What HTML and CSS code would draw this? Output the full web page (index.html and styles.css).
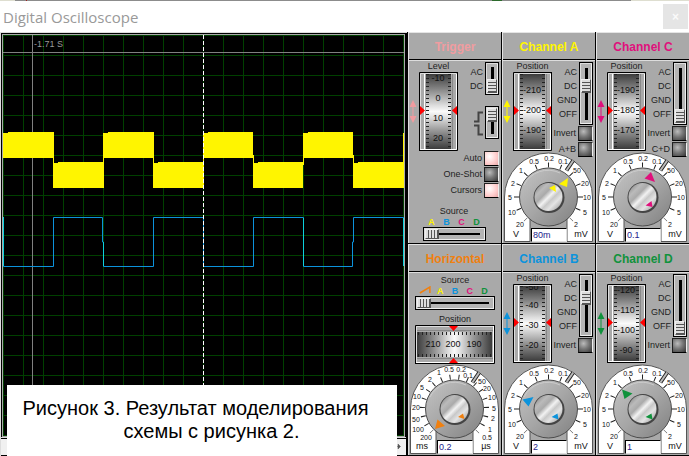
FILE: index.html
```html
<!DOCTYPE html>
<html lang="en">
<head>
<meta charset="utf-8">
<title>Digital Oscilloscope</title>
<link rel="stylesheet" href="styles.css">
</head>
<body>
<svg class="defs" width="0" height="0" aria-hidden="true">
  <defs>
    <linearGradient id="roll" x1="0" y1="0" x2="0" y2="1">
      <stop offset="0" stop-color="#3c3c3c"/><stop offset=".2" stop-color="#858585"/>
      <stop offset=".42" stop-color="#dedede"/><stop offset=".5" stop-color="#fafafa"/>
      <stop offset=".58" stop-color="#dedede"/><stop offset=".8" stop-color="#858585"/>
      <stop offset="1" stop-color="#3c3c3c"/>
    </linearGradient>
    <linearGradient id="rollh">
      <stop offset="0" stop-color="#3c3c3c"/><stop offset=".2" stop-color="#858585"/>
      <stop offset=".42" stop-color="#dedede"/><stop offset=".5" stop-color="#fafafa"/>
      <stop offset=".58" stop-color="#dedede"/><stop offset=".8" stop-color="#858585"/>
      <stop offset="1" stop-color="#3c3c3c"/>
    </linearGradient>
    <linearGradient id="knob" x1="0" y1="0" x2="1" y2="1">
      <stop offset="0" stop-color="#c4c4c4"/><stop offset=".5" stop-color="#a6a6a6"/><stop offset="1" stop-color="#808080"/>
    </linearGradient>
    <linearGradient id="cap" x1="0" y1="0" x2="1" y2="1">
      <stop offset="0" stop-color="#777"/><stop offset=".25" stop-color="#bbb"/><stop offset=".38" stop-color="#aaa"/>
      <stop offset=".5" stop-color="#f2f2f2"/><stop offset=".6" stop-color="#c8c8c8"/><stop offset=".72" stop-color="#e4e4e4"/>
      <stop offset="1" stop-color="#888"/>
    </linearGradient>
    <symbol id="face" viewBox="0 0 90 90">
      <path d="M.5 89.500V45A44 44 0 0 1 88.500 45V89.500H63V66H26V89.500Z" fill="#fff" stroke="#555"/>
      <path d="M62.400 18.500L69.200 8.500" stroke="#222" stroke-width="4"/>
      <path d="M62.400 18.500L69.200 8.500" stroke="#bbb" stroke-width="2"/>
    </symbol>
    <symbol id="knobs" viewBox="0 0 90 90">
      <circle cx="44.500" cy="45" r="29" fill="url(#knob)" stroke="#4c4c4c"/>
      <path d="M20 33A27 27 0 0 1 56 21" fill="none" stroke="#ccc"/>
      <circle cx="45" cy="45.500" r="15.500" fill="#444"/>
      <circle cx="44.500" cy="45" r="14" fill="url(#cap)"/>
    </symbol>
    <symbol id="wheel" viewBox="0 0 39 79">
      <path d="M.5 79V.5H39" fill="none" stroke="#000"/>
      <path d="M1.500 77V1.500H37.500" fill="none" stroke="#ddd"/>
      <path d="M38.500 0V78.500H0" fill="none" stroke="#000"/>
      <path d="M37.500 2V77.500H1" fill="none" stroke="#fff"/>
      <path d="M5.500 2V77" stroke="#fff"/><path d="M33.500 2V77" stroke="#888"/>
      <rect x="7" y="2" width="25" height="75" fill="url(#roll)"/>
      <path d="M1 34L6 38.500L1 43ZM38 34L33 38.500L38 43Z" fill="#f00"/>
    </symbol>
    <symbol id="updown" viewBox="0 0 8 23">
      <path d="M4 4V19" stroke="currentColor"/>
      <path d="M4 0L7.500 7H.5ZM4 23L7.500 16H.5Z" fill="currentColor"/>
    </symbol>
    <pattern id="graticule" width="20" height="20" patternUnits="userSpaceOnUse">
      <path d="M.5 0V20M0 .5H20" stroke="#004000"/>
    </pattern>
  </defs>
</svg>

<div class="strip"><i class="pale start"></i><i class="red"></i><i class="green"></i><i class="pale end"></i></div>
<header class="titlebar">
  <h1>Digital Oscilloscope</h1>
  <button class="close" type="button" aria-label="Close">×</button>
</header>

<main class="device">
  <section class="display">
    <svg class="trace" viewBox="0 0 401 401" preserveAspectRatio="none">
      <rect width="401" height="401" fill="#000"/>
      <rect width="401" height="401" fill="url(#graticule)"/>
      <path d="M0 17.500H401M29.500 0V401" stroke="#808080"/>
      <g fill="#fff500">
        <path d="M0 98H5V97H51V123H0ZM100 98H105V97H151V123H100ZM200 98H205V97H250V123H200ZM300 98H305V97H350V123H300Z"/>
        <path d="M50 128H55V127H101V153H50ZM150 128H155V127H201V153H150ZM250 128H255V127H300V153H250ZM350 128H355V127H401V153H350Z"/>
        <path d="M50 120H51V130H50ZM100 120H101V130H100ZM150 120H151V130H150ZM200 120H201V130H200ZM250 120H251V130H250ZM300 120H301V130H300ZM350 120H351V130H350ZM400 98H401V130H400Z"/>
      </g>
      <path d="M.5 182V231.500H50.500V182.500H99.500V207H100.500V231.500H150.500V182.500H200.500V231.500H250.500V182.500H300.500V231.500H349.500V207H350.500V182.500H400.500V231" fill="none" stroke="#0c93dc"/>
      <path d="M.5 182V231M100.500 207V231M300.500 183V231M400.500 183V231" stroke="#0cd0dc"/>
      <path d="M200.500 0V401" stroke="#fff" stroke-dasharray="4 2"/>
      <text x="31" y="12" class="time">-1.71 S</text>
    </svg>
    <div class="scroller"><button type="button" class="right" aria-label="Scroll right"><svg viewBox="0 0 5 7"><path d="M0 3.500H2M2 1L4.500 3.500L2 6Z" fill="#555" stroke="#555" stroke-width=".5"/></svg></button></div>
    <p class="caption" lang="ru"><span>Рисунок 3. Результат моделирования</span><span class="second">схемы с рисунка 2.</span></p>
  </section>

  <div class="panels">
    <section class="panel trigger">
      <h2>Trigger</h2>
      <div class="body">
        <div class="upper">
          <svg class="arrows"><use href="#updown"/></svg>
          <span class="name">Level</span>
          <svg class="wheel" viewBox="0 0 39 79"><use href="#wheel"/>
            <svg x="7" y="2" width="25" height="75"><path class="minor" d="M1.500 0V75M23.500 0V75"/><text x="12" y="7">-10</text><text x="12" y="27">0</text><text x="12" y="47">10</text><text x="12" y="67">20</text></svg></svg>
          <div class="side">
            <div class="switch two"><label for="t-cpl"><span>AC</span><span>DC</span></label><input id="t-cpl" type="range" min="0" max="1" value="1"></div>
            <div class="switch two edge"><label for="t-edge" aria-label="Edge"><svg viewBox="0 0 9 28"><path d="M0 12.500H4.500V3.500H9M0 16.500H4.500V25.500H9" fill="none" stroke="#444" stroke-width="2"/></svg></label><input id="t-edge" type="range" min="0" max="1" value="0"></div>
            <div class="push"><label for="t-auto">Auto</label><button id="t-auto" class="lit" type="button"></button></div>
            <div class="push"><label for="t-one">One-Shot</label><button id="t-one" type="button"></button></div>
            <div class="push"><label for="t-cur">Cursors</label><button id="t-cur" class="lit" type="button"></button></div>
          </div>
        </div>
        <div class="source">
          <label for="t-src">Source</label>
          <div class="letters"><b class="a">A</b><b class="b">B</b><b class="c">C</b><b class="d">D</b></div>
          <input id="t-src" type="range" min="0" max="3" value="0">
        </div>
      </div>
    </section>

    <section class="panel cha">
      <h2>Channel A</h2>
      <div class="body">
        <div class="upper">
          <svg class="arrows"><use href="#updown"/></svg>
          <span class="name">Position</span>
          <svg class="wheel" viewBox="0 0 39 79"><use href="#wheel"/>
            <svg x="7" y="2" width="25" height="75"><path class="minor" d="M1.500 0V75M23.500 0V75"/><text x="12" y="19">-210</text><text x="12" y="39">-200</text><text x="12" y="59">-190</text></svg></svg>
          <div class="side">
            <div class="switch"><label for="a-cpl"><span>AC</span><span>DC</span><span>GND</span><span>OFF</span></label><input id="a-cpl" type="range" min="0" max="3" value="1"></div>
            <div class="push"><label for="a-inv">Invert</label><button id="a-inv" type="button"></button></div>
            <div class="push"><label for="a-sum">A+B</label><button id="a-sum" type="button"></button></div>
          </div>
        </div>
        <div class="dial">
          <svg viewBox="0 0 90 90"><use href="#face"/><path class="ticks" pathLength="270" d="M21.900 67.600A32 32 0 1 1 67.100 67.600"/><use href="#knobs"/>
            <path class="mark" d="M55 32L64 26L63 35ZM45 36L51 33L52 40Z"/>
            <text x="16" y="75">20</text><text x="8" y="63">10</text><text x="6" y="48">5</text><text x="9" y="34">2</text><text x="17" y="21">1</text><text x="30" y="12">0.5</text><text x="45" y="9">0.2</text><text x="59" y="12">0.1</text><text x="73" y="21">50</text><text x="81" y="34">20</text><text x="83" y="48">10</text><text x="81" y="63">5</text><text x="72" y="75">2</text><text class="unit" x="12" y="85">V</text><text class="unit" x="77" y="85">mV</text></svg>
          <input type="text" value="80m" aria-label="Channel A scale">
        </div>
      </div>
    </section>

    <section class="panel chc">
      <h2>Channel C</h2>
      <div class="body">
        <div class="upper">
          <svg class="arrows"><use href="#updown"/></svg>
          <span class="name">Position</span>
          <svg class="wheel" viewBox="0 0 39 79"><use href="#wheel"/>
            <svg x="7" y="2" width="25" height="75"><path class="minor" d="M1.500 0V75M23.500 0V75"/><text x="12" y="19">-190</text><text x="12" y="39">-180</text><text x="12" y="59">-170</text></svg></svg>
          <div class="side">
            <div class="switch"><label for="c-cpl"><span>AC</span><span>DC</span><span>GND</span><span>OFF</span></label><input id="c-cpl" type="range" min="0" max="3" value="3"></div>
            <div class="push"><label for="c-inv">Invert</label><button id="c-inv" type="button"></button></div>
            <div class="push"><label for="c-sum">C+D</label><button id="c-sum" type="button"></button></div>
          </div>
        </div>
        <div class="dial">
          <svg viewBox="0 0 90 90"><use href="#face"/><path class="ticks" pathLength="270" d="M21.900 67.600A32 32 0 1 1 67.100 67.600"/><use href="#knobs"/>
            <path class="mark" d="M53 20L46.500 26.500L57 30ZM47.500 53.500L53.500 49L54.500 55Z"/>
            <text x="16" y="75">20</text><text x="8" y="63">10</text><text x="6" y="48">5</text><text x="9" y="34">2</text><text x="17" y="21">1</text><text x="30" y="12">0.5</text><text x="45" y="9">0.2</text><text x="59" y="12">0.1</text><text x="73" y="21">50</text><text x="81" y="34">20</text><text x="83" y="48">10</text><text x="81" y="63">5</text><text x="72" y="75">2</text><text class="unit" x="12" y="85">V</text><text class="unit" x="77" y="85">mV</text></svg>
          <input type="text" value="0.1" aria-label="Channel C scale">
        </div>
      </div>
    </section>

    <section class="panel horizontal">
      <h2>Horizontal</h2>
      <div class="body">
        <div class="source wide">
          <label for="h-src">Source</label>
          <div class="letters"><svg class="ramp" viewBox="0 0 11 8"><path d="M0 7L10 1V7" fill="none" stroke="currentColor" stroke-width="1.500"/></svg><b class="a">A</b><b class="b">B</b><b class="c">C</b><b class="d">D</b></div>
          <input id="h-src" type="range" min="0" max="4" value="0">
        </div>
        <span class="name">Position</span>
        <svg class="hwheel" viewBox="0 0 80 39">
          <path d="M.5 39V.5H80" fill="none" stroke="#000"/><path d="M1.500 38V1.500H79" fill="none" stroke="#ddd"/>
          <path d="M0 38.500H79.500V0" fill="none" stroke="#000"/><path d="M1 37.500H78.500V1" fill="none" stroke="#fff"/>
          <path d="M2 5.500H78M2 33.500H78" stroke="#888"/>
          <rect x="2" y="7" width="75" height="25" fill="url(#rollh)"/>
          <path d="M3 8.500H76M3 30.500H76" stroke="#222" stroke-width="3" stroke-dasharray="1 3"/>
          <path d="M34 1H43L38.500 6ZM34 38H43L38.500 33Z" fill="#f00"/>
          <text x="18" y="22">210</text><text x="38" y="22">200</text><text x="59" y="22">190</text>
        </svg>
        <div class="dial">
          <svg viewBox="0 0 90 90"><use href="#face"/><path class="ticks fine" pathLength="270" d="M21.900 67.600A32 32 0 1 1 67.100 67.600"/><use href="#knobs"/>
            <path class="mark" d="M27.500 55.500L35 62L25 65ZM48 53L53 49.500L54.500 55Z"/>
            <text x="16" y="76">200</text><text x="8" y="68">100</text><text x="6" y="58">50</text><text x="6" y="46">20</text><text x="7" y="35">10</text><text x="12" y="26">5</text><text x="20" y="18">2</text><text x="29" y="11">1</text><text x="39" y="8">0.5</text><text x="51" y="8">0.2</text><text x="58" y="14">0.1</text><text x="72" y="20">50</text><text x="77" y="27">20</text><text x="82" y="36">10</text><text x="84" y="47">5</text><text x="83" y="57">2</text><text x="80" y="68">1</text><text x="77" y="76">0.5</text><text class="unit" x="12" y="85">ms</text><text class="unit" x="76" y="85">µs</text></svg>
          <input type="text" value="0.2" aria-label="Time base">
        </div>
      </div>
    </section>

    <section class="panel chb">
      <h2>Channel B</h2>
      <div class="body">
        <div class="upper">
          <svg class="arrows"><use href="#updown"/></svg>
          <span class="name">Position</span>
          <svg class="wheel" viewBox="0 0 39 79"><use href="#wheel"/>
            <svg x="7" y="2" width="25" height="75"><path class="minor" d="M1.500 0V75M23.500 0V75"/><text x="12" y="4">-50</text><text x="12" y="22">-40</text><text x="12" y="42">-30</text><text x="12" y="62">-20</text></svg></svg>
          <div class="side">
            <div class="switch"><label for="b-cpl"><span>AC</span><span>DC</span><span>GND</span><span>OFF</span></label><input id="b-cpl" type="range" min="0" max="3" value="1"></div>
            <div class="push"><label for="b-inv">Invert</label><button id="b-inv" type="button"></button></div>
          </div>
        </div>
        <div class="dial">
          <svg viewBox="0 0 90 90"><use href="#face"/><path class="ticks" pathLength="270" d="M21.900 67.600A32 32 0 1 1 67.100 67.600"/><use href="#knobs"/>
            <path class="mark" d="M18.500 35.500L29.500 33L24.500 42.500ZM47.500 53L53.500 49.500L54.500 55.500Z"/>
            <text x="16" y="75">20</text><text x="8" y="63">10</text><text x="6" y="48">5</text><text x="9" y="34">2</text><text x="17" y="21">1</text><text x="30" y="12">0.5</text><text x="45" y="9">0.2</text><text x="59" y="12">0.1</text><text x="73" y="21">50</text><text x="81" y="34">20</text><text x="83" y="48">10</text><text x="81" y="63">5</text><text x="72" y="75">2</text><text class="unit" x="12" y="85">V</text><text class="unit" x="77" y="85">mV</text></svg>
          <input type="text" value="2" aria-label="Channel B scale">
        </div>
      </div>
    </section>

    <section class="panel chd">
      <h2>Channel D</h2>
      <div class="body">
        <div class="upper">
          <svg class="arrows"><use href="#updown"/></svg>
          <span class="name">Position</span>
          <svg class="wheel" viewBox="0 0 39 79"><use href="#wheel"/>
            <svg x="7" y="2" width="25" height="75"><path class="minor" d="M1.500 0V75M23.500 0V75"/><text x="12" y="7">-120</text><text x="12" y="27">-110</text><text x="12" y="47">-100</text><text x="12" y="67">-90</text></svg></svg>
          <div class="side">
            <div class="switch"><label for="d-cpl"><span>AC</span><span>DC</span><span>GND</span><span>OFF</span></label><input id="d-cpl" type="range" min="0" max="3" value="3"></div>
            <div class="push"><label for="d-inv">Invert</label><button id="d-inv" type="button"></button></div>
          </div>
        </div>
        <div class="dial">
          <svg viewBox="0 0 90 90"><use href="#face"/><path class="ticks" pathLength="270" d="M21.900 67.600A32 32 0 1 1 67.100 67.600"/><use href="#knobs"/>
            <path class="mark" d="M24 25.500L34.500 29.500L26.500 35ZM47.500 53L53.500 49.500L54.500 55.500Z"/>
            <text x="16" y="75">20</text><text x="8" y="63">10</text><text x="6" y="48">5</text><text x="9" y="34">2</text><text x="17" y="21">1</text><text x="30" y="12">0.5</text><text x="45" y="9">0.2</text><text x="59" y="12">0.1</text><text x="73" y="21">50</text><text x="81" y="34">20</text><text x="83" y="48">10</text><text x="81" y="63">5</text><text x="72" y="75">2</text><text class="unit" x="12" y="85">V</text><text class="unit" x="77" y="85">mV</text></svg>
          <input type="text" value="1" aria-label="Channel D scale">
        </div>
      </div>
    </section>
  </div>
</main>
</body>
</html>
```
FILE: styles.css
```css
* { box-sizing: border-box; }

body {
  margin: 0;
  min-height: 100vh;
  display: flex;
  flex-direction: column;
  background: #fff;
  font: 9px/11px "Liberation Sans", Arial, sans-serif;
  color: #222;
}

svg { display: block; }
svg.defs { position: absolute; }
h1, h2, p { margin: 0; }

/* edge of the window behind */
.strip { display: flex; height: 1px; background: #8c8c8c; }
.strip .pale { background: #deded0; }
.strip .start { width: 15px; }
.strip .end { width: 58px; }
.strip .red { width: 1px; margin-left: 11px; background: #a02020; }
.strip .green { width: 10px; margin: 0 129px 0 auto; background: #2c6a2c; }

.titlebar {
  display: flex;
  align-items: center;
  justify-content: space-between;
  height: 31px;
  padding: 0 1px 0 3px;
}
.titlebar h1 {
  font: 15px/20px "Open Sans", "Noto Sans", sans-serif;
  color: #999;
}
.close {
  width: 25px;
  height: 25px;
  border: 0;
  padding: 0;
  background: #e5e5e5;
  color: #fafafa;
  font: bold 12px/20px "Liberation Sans", sans-serif;
}

.device { flex: 1; display: flex; background: #000; }

/* screen */
.display {
  position: relative;
  flex: 1;
  min-width: 0;
  display: flex;
  flex-direction: column;
  border-top: 1px solid #ddd;
  border-left: 1px solid #ddd;
  background: #000;
}
.trace {
  flex: 1;
  width: auto;
  min-height: 0;
  margin: 1px 2px 0 1px;
  border: 1px solid #aaa;
}
.time { font-size: 9px; fill: #999; }
.scroller {
  display: flex;
  justify-content: flex-end;
  height: 19px;
  border-top: 1px solid #ddd;
  border-bottom: 1px solid #000;
  margin-right: 1px;
  background: #f0f0f0;
  box-shadow: inset 0 1px #000;
}
.right {
  display: flex;
  align-items: center;
  width: 10px;
  border: 0;
  padding: 0;
  background: none;
}
.right svg { width: 5px; height: 7px; }

.caption {
  position: absolute;
  left: 6px;
  right: 10px;
  bottom: 0;
  padding: 12px 13px 13px 0;
  background: #fff;
  color: #000;
  font: 20px/23px "Liberation Sans", Arial, sans-serif;
  text-align: center;
}
.caption span { display: block; white-space: nowrap; }
.caption .second { padding-left: 32px; }

/* control panels */
.panels {
  display: grid;
  grid-template-columns: repeat(3, 94px);
  grid-template-rows: 1fr 1fr;
}
.panel {
  display: flex;
  flex-direction: column;
  border-left: 1px solid #000;
  border-bottom: 1px solid #000;
  background: #a9a9a9;
}
.panel h2 {
  height: 28px;
  border: solid #e4e4e4;
  border-width: 1px 0 0 1px;
  box-shadow: inset 0 -1px #000;
  font-size: 12px;
  line-height: 28px;
  text-align: center;
  color: var(--tone);
}
.trigger { --tone: #f09ca0; }
.cha { --tone: #fff500; }
.chb { --tone: #0c93dc; }
.chc { --tone: #e0107c; }
.chd { --tone: #10923c; }
.horizontal { --tone: #f08010; }

.body {
  flex: 1;
  display: flex;
  flex-direction: column;
  border: solid #ddd;
  border-width: 1px 0 0 1px;
  padding-right: 2px;
}

.upper {
  display: grid;
  grid-template-columns: 10px 39px minmax(0, 1fr);
  grid-template-rows: 11px 79px;
  height: 91px;
}
.arrows {
  grid-area: 2 / 1;
  align-self: center;
  width: 8px;
  height: 23px;
  color: var(--tone);
}
.name { grid-area: 1 / 2; text-align: center; white-space: nowrap; }
.upper .name { justify-self: center; }
.wheel { grid-area: 2 / 2; width: 39px; height: 79px; }
.wheel text, .hwheel text {
  font-size: 9px;
  fill: #111;
  text-anchor: middle;
}
.minor {
  fill: none;
  stroke: #222;
  stroke-width: 3;
  stroke-dasharray: 1 3;
}

.side {
  grid-area: 1 / 3 / 3 / 4;
  display: flex;
  flex-direction: column;
  gap: 1px;
  padding-top: 1px;
}
.switch, .push {
  display: flex;
  justify-content: flex-end;
  gap: 2px;
}
.switch label { padding-top: 3px; text-align: right; line-height: 14px; }
.switch label span { display: block; }
.switch label svg { width: 9px; height: 28px; }
.edge { margin: 10px 0 11px; }
.push { align-items: center; height: 15px; white-space: nowrap; }
.push button {
  flex: none;
  width: 15px;
  height: 15px;
  padding: 0;
  border: 1px solid #000;
  border-color: #222 #eee #000 #222;
  background: radial-gradient(circle at 35% 35%, #bbb, #777 45%, #333);
}
.push .lit { background: radial-gradient(circle at 35% 35%, #fff, #fcc 60%, #e8a8a8); }

/* slide switches */
input[type="range"] {
  appearance: none;
  flex: none;
  margin: 0;
  padding: 1px;
  border: 1px solid #000;
  box-shadow: inset 1px 1px #ddd, inset -1px -1px #eee;
}
.switch input {
  writing-mode: vertical-lr;
  width: 14px;
  height: 63px;
  background: linear-gradient(#000, #000) center / 3px 52px no-repeat, #b4b4b4;
}
.switch.two input {
  height: 33px;
  background-size: 3px 23px, auto;
}
input[type="range"]::-webkit-slider-thumb {
  appearance: none;
  width: 10px;
  height: 14px;
  border: 1px solid #666;
  border-color: #eee #555 #555 #eee;
  background: repeating-linear-gradient(#ddd 0 2px, #555 2px 3px);
}

.source {
  display: flex;
  flex-direction: column;
  align-items: center;
  margin-top: 54px;
}
.letters { display: flex; width: 60px; }
.letters b { flex: 1; text-align: center; font-size: 9px; line-height: 10px; }
.letters .a { color: #fff500; }
.letters .b { color: #0c93dc; }
.letters .c { color: #e0107c; }
.letters .d { color: #10923c; }
.ramp { flex: 1; height: 8px; color: var(--tone); }
.source input {
  width: 63px;
  height: 14px;
  background: linear-gradient(#000, #000) center / 52px 2px no-repeat, #b4b4b4;
}
.source input::-webkit-slider-thumb {
  width: 14px;
  height: 10px;
  background: repeating-linear-gradient(90deg, #ddd 0 2px, #555 2px 3px);
}
.horizontal .body { padding-right: 0; }
.wide { margin-top: 2px; }
.wide .letters { width: 74px; }
.source.wide input { width: 80px; background-size: 68px 2px, auto; }
.horizontal .name { line-height: 12px; margin-top: 3px; }
.hwheel { width: 80px; height: 39px; align-self: center; }

/* rotary dials */
.dial {
  display: grid;
  justify-items: center;
  width: 90px;
  margin: auto 0 1px 1px;
}
.dial svg { grid-area: 1 / 1; width: 90px; height: 90px; }
.dial text { font-size: 7px; fill: #111; text-anchor: middle; }
.dial .unit { font-size: 9px; }
.ticks {
  fill: none;
  stroke: #222;
  stroke-width: 5;
  stroke-dasharray: 1.8 20.7;
  stroke-dashoffset: .9;
}
.fine { stroke-dasharray: 1.8 14.080; }
.mark { fill: var(--tone); }
.dial input {
  grid-area: 1 / 1;
  align-self: end;
  width: 36px;
  height: 14px;
  padding: 0 1px;
  border: 1px solid #000;
  border-color: #000 #ddd #ddd #000;
  border-radius: 0;
  background: #fff;
  color: #22228c;
  font: 9px/11px "Liberation Sans", Arial, sans-serif;
}
```
